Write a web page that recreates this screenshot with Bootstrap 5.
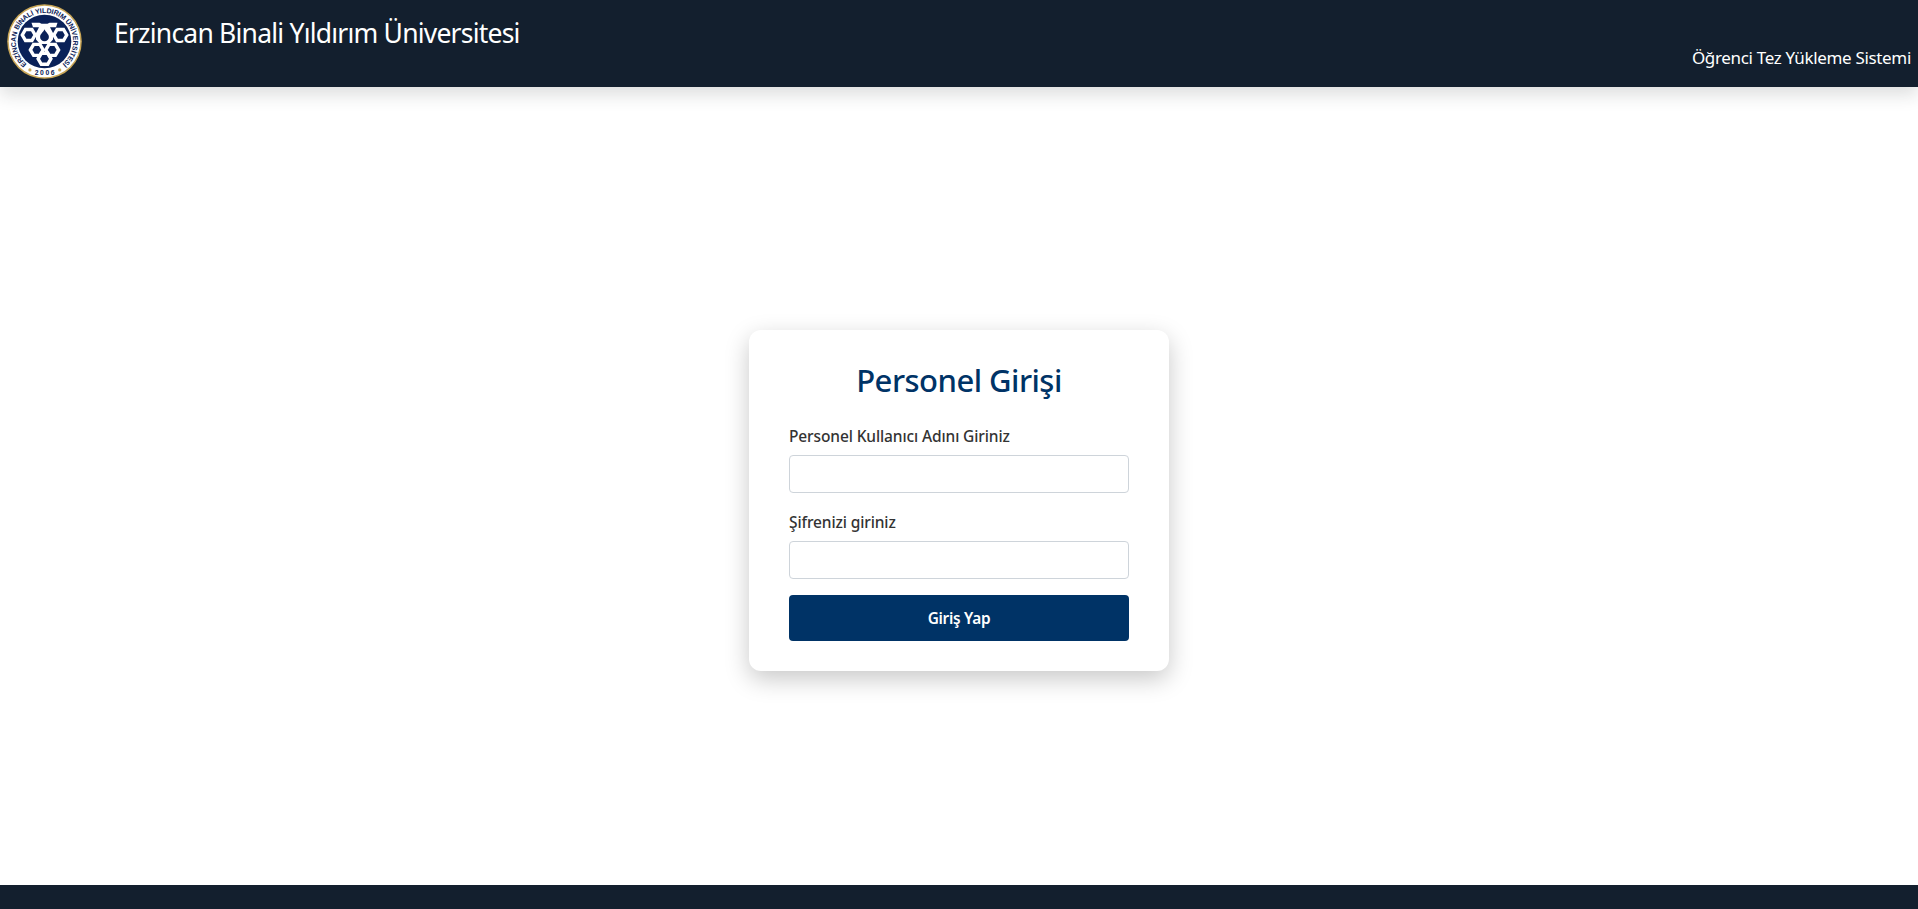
<!DOCTYPE html>
<html lang="tr">
<head>
<meta charset="utf-8">
<meta name="viewport" content="width=device-width, initial-scale=1">
<title>Öğrenci Tez Yükleme Sistemi</title>
<link href="https://cdn.jsdelivr.net/npm/bootstrap@5.3.0/dist/css/bootstrap.min.css" rel="stylesheet">
<style>
  body { font-family: "Segoe UI", "Noto Sans", sans-serif; }
  .bar { background: #131f2e; }
  .site-header { height: 87px; padding: 4px 7px 0 7px; }
  .uni-name { font-size: 26.5px; line-height: 33px; letter-spacing: -.79px; margin: 13px 0 0 32px; }
  .sys-name { font-size: 17px; line-height: 24px; letter-spacing: -.33px; margin-top: 42px; }
  .site-footer { height: 24px; }
  .login-card { width: 420px; padding: 30px 40px; border-radius: 12px; box-shadow: 0 8px 24px rgba(0,0,0,.22); }
  .login-title { font-size: 31px; line-height: 40px; letter-spacing: -.52px; font-weight: 550; color: #003366; margin-bottom: 23px; }
  .login-card .form-label { font-size: 15.5px; line-height: 24px; padding-top: 1px; margin-bottom: 7px; letter-spacing: -.12px; font-weight: 550; color: #333; }
  .login-card .form-control { height: 38px; border-color: #ced4da; border-radius: 4px; }
  .btn-login, .btn-login:hover { height: 46px; padding-top: 8px; background: #003366; color: #fff; font-size: 15.4px; font-weight: 600; letter-spacing: -.3px; border: 0; border-radius: 4px; }
  .main-area { margin-top: 29px; }
</style>
</head>
<body class="d-flex flex-column vh-100 bg-white overflow-hidden">
<header class="bar site-header shadow d-flex align-items-start text-white flex-shrink-0">
  <svg width="75" height="75" viewBox="-37.5 -37.5 75 75" role="img" aria-label="Logo">
    <defs>
      <path id="ring" d="M-16.8 23.2A28.6 28.6 0 1 1 16.8 23.2"/>
      <path id="hexa" d="M-6.4 0-3.2-5.5H3.2L6.4 0 3.2 5.5H-3.2Z"/>
    </defs>
    <circle r="37.3" fill="#c9a657"/>
    <circle r="35.8" fill="#fff"/>
    <circle r="26.8" fill="#0a2158"/>
    <text font-family="Liberation Sans" font-weight="700" font-size="7" fill="#0a2158"><textPath href="#ring" startOffset="1" textLength="141" lengthAdjust="spacing">ERZİNCAN BİNALİ YILDIRIM ÜNİVERSİTESİ</textPath></text>
    <text x=".9" y="33" text-anchor="middle" font-family="Liberation Sans" font-weight="700" font-size="6.8" letter-spacing="1.6" fill="#0a2158">2006</text>
    <circle cx="-14.6" cy="28.4" r="1.6" fill="#c9a657"/>
    <circle cx="15.2" cy="28.4" r="1.6" fill="#c9a657"/>
    <path d="M-13-18.8H-5L-3-17.8H3L5-18.8H13L11.5-14.2H5.5L8.5-8.5V-2L4.5 2.5H-4.5L-8.5-2V-8.5L-5.5-14.2H-11.5Z" fill="#fff"/>
    <path d="M0-12.2C1-9.5 4.4-7.5 4.4-4.6A4.4 4.4 0 0 1-4.4-4.6C-4.4-7.5-1-9.5 0-12.2Z" fill="#0a2158"/>
    <g fill="none" stroke="#fff" stroke-width="3.4">
      <use href="#hexa" x="-15.8" y="-6.5"/>
      <use href="#hexa" x="15.8" y="-6.5"/>
      <use href="#hexa" x="-7.7" y="8.4"/>
      <use href="#hexa" x="7.7" y="8.4"/>
    </g>
    <use href="#hexa" x="0" y="17.3" fill="#0a2158" stroke="#fff" stroke-width="3.4"/>
  </svg>
  <div class="uni-name">Erzincan Binali Yıldırım Üniversitesi</div>
  <div class="sys-name ms-auto">Öğrenci Tez Yükleme Sistemi</div>
</header>
<main class="main-area flex-grow-1 d-flex justify-content-center align-items-center">
  <form class="login-card bg-white" onsubmit="return false">
    <h2 class="login-title text-center">Personel Girişi</h2>
    <div class="mb-3">
      <label class="form-label d-block" for="user">Personel Kullanıcı Adını Giriniz</label>
      <input type="text" class="form-control" id="user">
    </div>
    <div class="mb-3">
      <label class="form-label d-block" for="pass">Şifrenizi giriniz</label>
      <input type="password" class="form-control" id="pass">
    </div>
    <button class="btn btn-login w-100" type="submit">Giriş Yap</button>
  </form>
</main>
<footer class="bar site-footer flex-shrink-0"></footer>
<script src="https://cdn.jsdelivr.net/npm/bootstrap@5.3.0/dist/js/bootstrap.bundle.min.js"></script>
</body>
</html>
